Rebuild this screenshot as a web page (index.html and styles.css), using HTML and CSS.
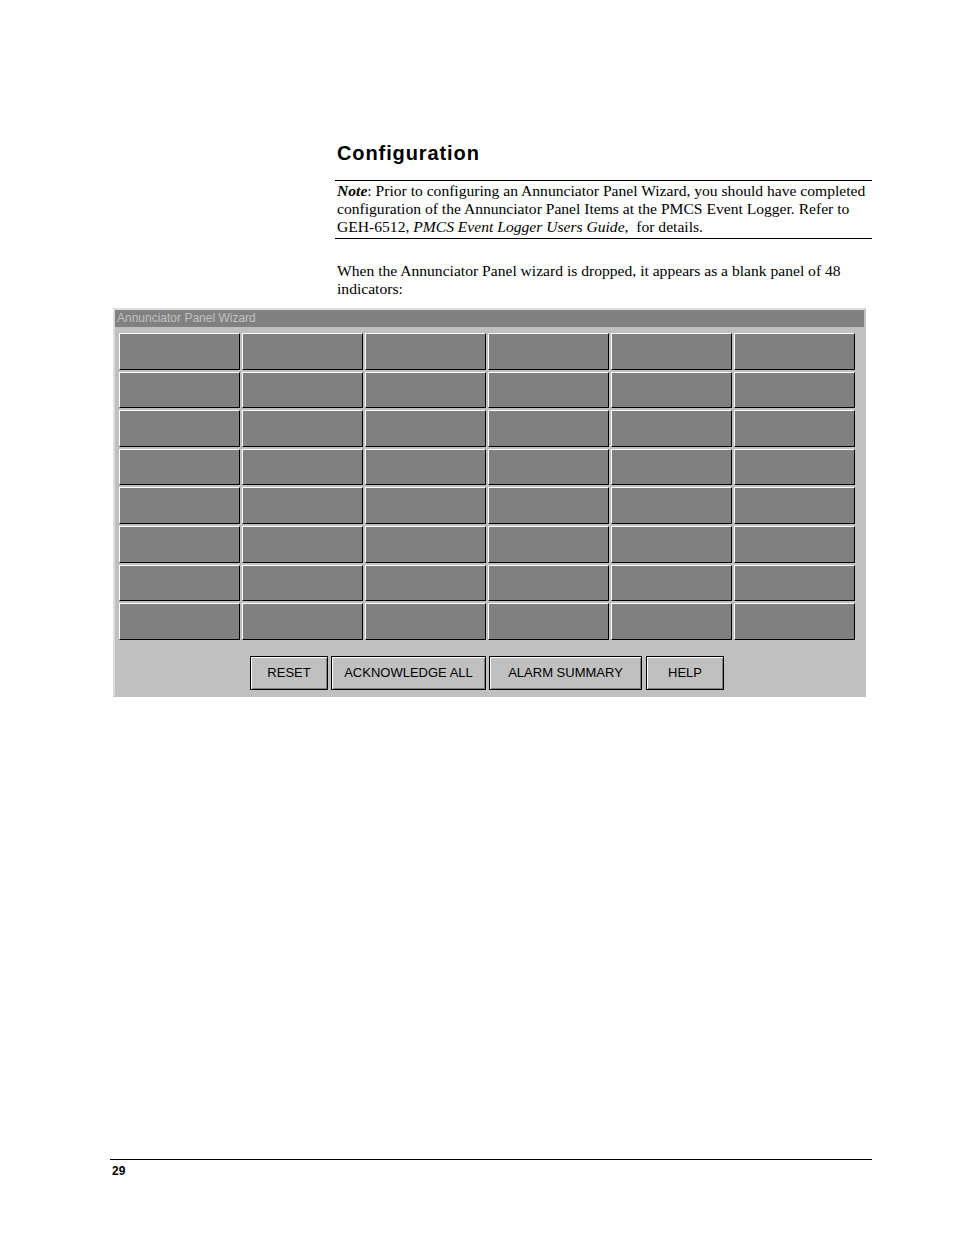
FILE: index.html
```html
<!DOCTYPE html>
<html>
<head>
<meta charset="utf-8">
<link rel="stylesheet" href="styles.css">
</head>
<body>
<div class="page">
  <div class="content">
    <h1 class="heading">Configuration</h1>
    <div class="note"><b><i>Note</i></b>: Prior to configuring an Annunciator Panel Wizard, you should have completed configuration of the Annunciator Panel Items at the PMCS Event Logger. Refer to GEH-6512, <i>PMCS Event Logger Users Guide</i>,&nbsp; for details.</div>
    <p class="para">When the Annunciator Panel wizard is dropped, it appears as a blank panel of 48 indicators:</p>
  </div>
  <div class="panel">
    <div class="titlebar">Annunciator Panel Wizard</div>
    <div class="grid">
      <div class="cell"></div><div class="cell"></div><div class="cell"></div><div class="cell"></div><div class="cell"></div><div class="cell"></div>
      <div class="cell"></div><div class="cell"></div><div class="cell"></div><div class="cell"></div><div class="cell"></div><div class="cell"></div>
      <div class="cell"></div><div class="cell"></div><div class="cell"></div><div class="cell"></div><div class="cell"></div><div class="cell"></div>
      <div class="cell"></div><div class="cell"></div><div class="cell"></div><div class="cell"></div><div class="cell"></div><div class="cell"></div>
      <div class="cell"></div><div class="cell"></div><div class="cell"></div><div class="cell"></div><div class="cell"></div><div class="cell"></div>
      <div class="cell"></div><div class="cell"></div><div class="cell"></div><div class="cell"></div><div class="cell"></div><div class="cell"></div>
      <div class="cell"></div><div class="cell"></div><div class="cell"></div><div class="cell"></div><div class="cell"></div><div class="cell"></div>
      <div class="cell"></div><div class="cell"></div><div class="cell"></div><div class="cell"></div><div class="cell"></div><div class="cell"></div>
    </div>
    <div class="buttons">
      <div class="btn btn-reset">RESET</div>
      <div class="btn btn-ack">ACKNOWLEDGE ALL</div>
      <div class="btn btn-alarm">ALARM SUMMARY</div>
      <div class="btn btn-help">HELP</div>
    </div>
  </div>
  <div class="footer">29</div>
</div>
</body>
</html>
```
FILE: styles.css
```css
html, body {
  margin: 0;
  padding: 0;
  background: #ffffff;
}
.page {
  width: 954px;
  height: 1235px;
  overflow: hidden;
  padding-top: 142px;
  box-sizing: border-box;
}
.content {
  margin-left: 335px;
  width: 537px;
}
.heading {
  margin: 0;
  padding-left: 2px;
  font-family: "Liberation Sans", Arial, sans-serif;
  font-weight: bold;
  font-size: 20px;
  letter-spacing: 0.9px;
  line-height: 23px;
  color: #000;
}
.note {
  margin-top: 15px;
  border-top: 1px solid #000;
  border-bottom: 1px solid #000;
  padding: 1px 0 2px 2px;
  font-family: "Liberation Serif", "Times New Roman", serif;
  font-size: 15.6px;
  line-height: 18px;
  color: #000;
}
.para {
  margin: 23px 0 0 0;
  padding-left: 2px;
  font-family: "Liberation Serif", "Times New Roman", serif;
  font-size: 15.6px;
  line-height: 18px;
  color: #000;
}
.panel {
  margin-left: 113px;
  margin-top: 10px;
  width: 753px;
  height: 389px;
  box-sizing: border-box;
  background: #c0c0c0;
  border: 2px solid #c0c0c0;
  border-top-color: #dcdcdc;
  border-left-color: #dcdcdc;
}
.titlebar {
  height: 17px;
  background: #808080;
  color: #c0c0c0;
  font-family: "Liberation Sans", Arial, sans-serif;
  font-size: 12px;
  line-height: 17px;
  padding-left: 2px;
  white-space: nowrap;
}
.grid {
  margin: 6px 0 0 4px;
  display: grid;
  grid-template-columns: repeat(6, 121px);
  grid-template-rows: repeat(8, 36.6px);
  column-gap: 2px;
  row-gap: 2px;
}
.cell {
  box-sizing: border-box;
  background: #808080;
  border: 1px solid;
  border-color: #ffffff #000000 #000000 #ffffff;
}
.buttons {
  display: flex;
  margin: 16px 0 0 135px;
}
.btn {
  box-sizing: border-box;
  height: 34px;
  background: #c0c0c0;
  border: 1px solid #000;
  box-shadow: inset 1px 1px 0 #ffffff, inset -1px -1px 0 #808080;
  font-family: "Liberation Sans", Arial, sans-serif;
  font-size: 13px;
  line-height: 32px;
  text-align: center;
  color: #000;
  white-space: nowrap;
}
.btn-reset { width: 78px; }
.btn-ack { width: 155px; margin-left: 3px; }
.btn-alarm { width: 153px; margin-left: 3px; }
.btn-help { width: 78px; margin-left: 4px; }
.footer {
  margin: 462px 0 0 110px;
  width: 762px;
  border-top: 1px solid #000;
  padding: 4px 0 0 2px;
  font-family: "Liberation Sans", Arial, sans-serif;
  font-weight: bold;
  font-size: 12px;
  line-height: 14px;
  color: #000;
  box-sizing: border-box;
}
```
